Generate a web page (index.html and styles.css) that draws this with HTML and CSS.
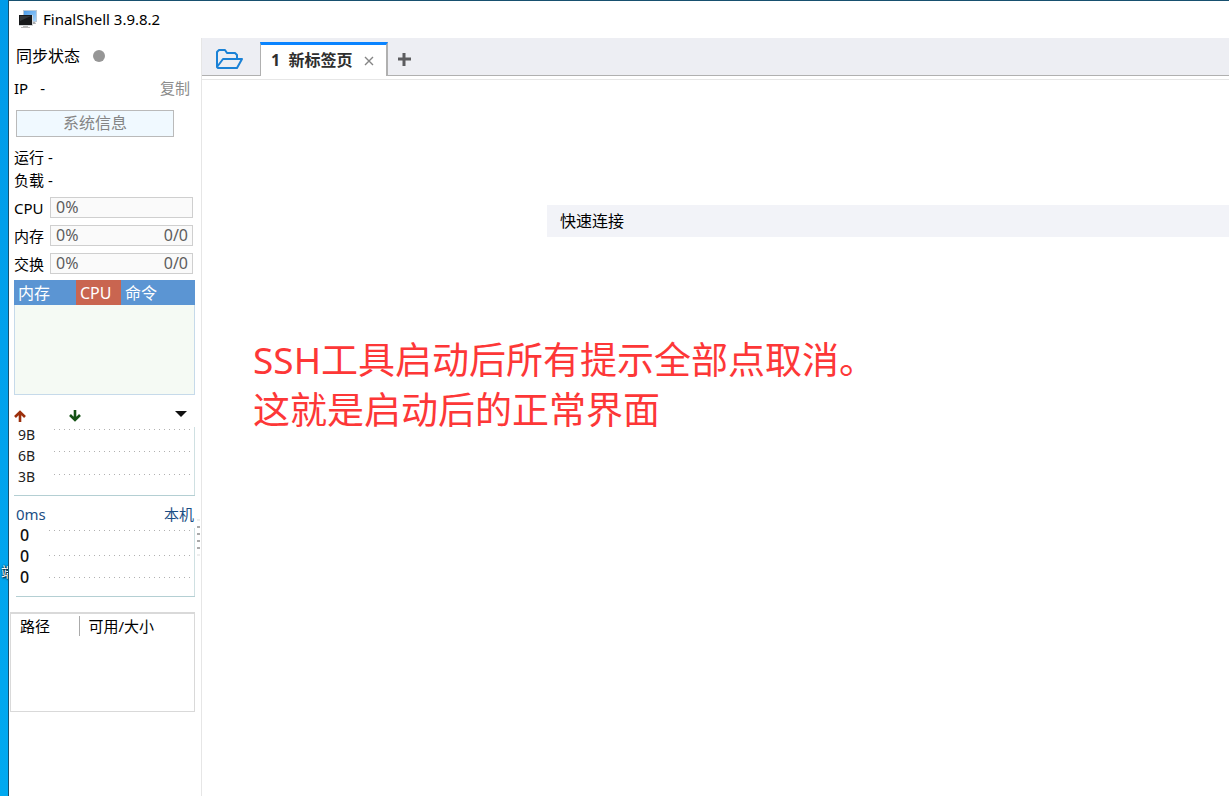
FILE: index.html
```html
<!DOCTYPE html>
<html lang="zh-CN">
<head>
    <meta charset="UTF-8">
    <meta name="viewport" content="width=device-width, initial-scale=1.0">
    <title>FinalShell 3.9.8.2</title>
    <link rel="stylesheet" href="styles.css">
</head>
<body>
    <div class="desktop"><span class="desktop-label">端</span></div>
    <div class="window">
        <header class="titlebar">
            <svg class="app-icon" width="20" height="20" viewBox="0 0 20 20">
                <defs>
                    <linearGradient id="screen" x1="0" y1="0" x2="1" y2="1">
                        <stop offset="0" stop-color="#4a9be8"/>
                        <stop offset="1" stop-color="#a5d3fa"/>
                    </linearGradient>
                </defs>
                <rect x="5" y="1" width="14" height="12" fill="#b9c9d8"/>
                <rect x="6" y="2" width="12" height="10" fill="url(#screen)"/>
                <path d="M13 13h4l1 2h-5z" fill="#a9abad"/>
                <rect x="1" y="6" width="14" height="11" fill="#d5d8da"/>
                <rect x="1" y="6" width="13" height="10" fill="#17191b"/>
                <path d="M2 7h11l-11 5z" fill="#34383b"/>
                <path d="M5 17h5v1h2v1H3v-1h2z" fill="#bcbcbc"/>
            </svg>
            <span>FinalShell 3.9.8.2</span>
        </header>

        <div class="content">
            <aside class="sidebar">
                <div class="sync">同步状态<span class="dot"></span></div>
                <div class="ip">
                    <span>IP</span><span>-</span>
                    <button class="copy" type="button">复制</button>
                </div>
                <button class="sysinfo" type="button">系统信息</button>
                <div class="stat">运行 -</div>
                <div class="stat">负载 -</div>

                <div class="meters">
                    <span>CPU</span>
                    <div class="meter"><span>0%</span></div>
                    <span>内存</span>
                    <div class="meter"><span>0%</span><span>0/0</span></div>
                    <span>交换</span>
                    <div class="meter"><span>0%</span><span>0/0</span></div>
                </div>

                <div class="processes">
                    <table>
                        <tr>
                            <th class="col-mem">内存</th>
                            <th class="col-cpu">CPU</th>
                            <th>命令</th>
                        </tr>
                    </table>
                </div>

                <div class="net-head">
                    <svg width="12" height="12" viewBox="0 0 12 12" fill="none" stroke="#9c2f0c" stroke-width="2.6">
                        <path d="M6 12V2M1 7l5-5 5 5"/>
                    </svg>
                    <svg class="down" width="12" height="12" viewBox="0 0 12 12" fill="none" stroke="#145214" stroke-width="2.6">
                        <path d="M6 0v10M1 5l5 5 5-5"/>
                    </svg>
                    <button class="net-menu" type="button" aria-label="网卡">
                        <svg width="12" height="6" viewBox="0 0 12 6"><path d="M0 0h12L6 6z" fill="#111"/></svg>
                    </button>
                </div>
                <div class="chart">
                    <div class="labels"><span>9B</span><span>6B</span><span>3B</span></div>
                    <svg class="plot" width="100%" height="68">
                        <line x1="0" y1="2.500" x2="100%" y2="2.500"/>
                        <line x1="0" y1="24.500" x2="100%" y2="24.500"/>
                        <line x1="0" y1="47.500" x2="100%" y2="47.500"/>
                    </svg>
                </div>

                <div class="ping-head"><span>0ms</span><span>本机</span></div>
                <div class="chart ping">
                    <div class="labels"><span>0</span><span>0</span><span>0</span></div>
                    <svg class="plot" width="100%" height="68">
                        <line x1="0" y1="2.500" x2="100%" y2="2.500"/>
                        <line x1="0" y1="27.500" x2="100%" y2="27.500"/>
                        <line x1="0" y1="49.500" x2="100%" y2="49.500"/>
                    </svg>
                </div>

                <div class="disks">
                    <table>
                        <tr>
                            <th class="col-path">路径</th>
                            <th class="col-size">可用/大小</th>
                        </tr>
                    </table>
                </div>

                <div class="grip"><i></i><i></i><i></i><i></i><i></i><i></i></div>
            </aside>

            <main class="main">
                <nav class="tabs">
                    <button class="open" type="button" aria-label="打开">
                        <svg width="28" height="22" viewBox="0 0 28 22" fill="none" stroke="#1b82d6" stroke-width="2" stroke-linejoin="round">
                            <path d="M2 19V4l2-2h6l2 3h8l2 2v4"/>
                            <path d="M2 19l6-8h19l-5 9H3z"/>
                        </svg>
                    </button>
                    <div class="tab">
                        <a href="#">1&nbsp; 新标签页</a>
                        <button class="close" type="button" aria-label="关闭">
                            <svg width="10" height="10" viewBox="0 0 10 10" stroke="#858585" stroke-width="1.4"><path d="M1 1l8 8M9 1L1 9"/></svg>
                        </button>
                    </div>
                    <button class="add" type="button" aria-label="新建">
                        <svg width="14" height="14" viewBox="0 0 14 14" fill="#5c5c5f"><path d="M5.500 1h3v4.500H14v3H8.500V14h-3V8.500H1v-3h4.500z"/></svg>
                    </button>
                </nav>
                <div class="page">
                    <div class="quick">快速连接</div>
                    <p class="note">SSH工具启动后所有提示全部点取消。<br>这就是启动后的正常界面</p>
                </div>
            </main>
        </div>
    </div>
</body>
</html>
```

FILE: styles.css
```css
* {
    box-sizing: border-box;
}
body {
    margin: 0;
    display: flex;
    min-height: 100vh;
    overflow: hidden;
    font-family: 'Noto Sans', 'Noto Sans CJK SC', sans-serif;
    font-size: 15px;
    line-height: 20px;
    color: #000;
}
button {
    padding: 0;
    border: none;
    background: none;
    font: inherit;
    cursor: pointer;
}
svg {
    display: block;
    flex-shrink: 0;
}
table {
    width: 100%;
    border-collapse: collapse;
}
th {
    font-weight: normal;
    text-align: left;
}

/* Desktop strip left of the window */
.desktop {
    width: 8px;
    flex-shrink: 0;
    display: flex;
    align-items: center;
    overflow: hidden;
    background: linear-gradient(#009be9, #00a9f0);
}
.desktop-label {
    margin: 348px 0 0 1px;
    font-size: 14px;
    color: #fff;
    text-shadow: 1px 1px 2px #000, 0 0 2px #000;
}

.window {
    flex: 1;
    min-width: 0;
    display: flex;
    flex-direction: column;
    border-top: 1px solid #17506f;
    border-left: 1px solid #17506f;
    background: #fff;
}
.titlebar {
    display: flex;
    align-items: center;
    gap: 5px;
    height: 37px;
    padding: 0 0 2px 9px;
}
.content {
    flex: 1;
    display: flex;
}

/* Sidebar */
.sidebar {
    position: relative;
    width: 192px;
    flex-shrink: 0;
    padding: 0 6px 0 5px;
}
.sync {
    display: flex;
    align-items: center;
    gap: 13px;
    height: 36px;
    padding-left: 2px;
    font-size: 16px;
}
.dot {
    width: 12px;
    height: 12px;
    border-radius: 50%;
    background: #969696;
}
.ip {
    display: flex;
    align-items: center;
    gap: 12px;
    height: 28px;
    padding-right: 5px;
}
.copy {
    margin-left: auto;
    color: #8c8c8c;
}
.sysinfo {
    display: block;
    width: 158px;
    height: 27px;
    margin: 8px 0 9px 2px;
    padding-bottom: 2px;
    border: 1px solid #bababa;
    background: #f0f9ff;
    font-size: 16px;
    color: #858585;
}
.stat {
    line-height: 23px;
}
.meters {
    display: grid;
    grid-template-columns: 36px 1fr;
    grid-auto-rows: 21px;
    gap: 7px 0;
    align-items: center;
    margin: 5px 2px 6px 0;
}
.meter {
    display: flex;
    justify-content: space-between;
    align-items: center;
    height: 21px;
    padding: 0 4px 1px 5px;
    border: 1px solid #cfcfcf;
    background: #fafafa;
    font-size: 16px;
    color: #5e5e5e;
}
.processes {
    height: 115px;
    border: 1px solid #c6daea;
    border-top: none;
    background: #f5faf4;
}
.processes table {
    margin: 0 -1px;
    width: calc(100% + 2px);
    table-layout: fixed;
}
.processes th {
    height: 25px;
    padding: 0 4px;
    background: #5b95d3;
    font-size: 16px;
    color: #fff;
}
.processes .col-mem {
    width: 62px;
}
.processes .col-cpu {
    width: 45px;
    background: #c96550;
}
.net-head {
    display: flex;
    align-items: center;
    height: 29px;
    padding: 13px 8px 0 0;
}
.net-head .down {
    margin-left: 43px;
}
.net-menu {
    margin: 0 0 4px auto;
}
.chart {
    display: flex;
    align-items: flex-end;
    height: 72px;
    border-bottom: 1px solid #b4cfd3;
}
.labels {
    width: 40px;
    flex-shrink: 0;
    align-self: flex-start;
    display: flex;
    flex-direction: column;
    padding-left: 4px;
    font-size: 14px;
    line-height: 21px;
    color: #222;
}
.plot {
    flex: 1 1 0;
    min-width: 0;
    border-right: 1px solid #cfe0e2;
}
.plot line {
    stroke: #b0b0b0;
    stroke-dasharray: 1 4;
}
.ping-head {
    display: flex;
    justify-content: space-between;
    height: 29px;
    padding: 8px 1px 0 2px;
    color: #1c4f85;
}
.ping {
    margin-left: 2px;
}
.ping .labels {
    width: 33px;
    font-size: 16px;
    font-weight: 500;
    color: #111;
}
.disks {
    height: 100px;
    margin: 15px 0 0 -4px;
    border: 1px solid #d9d9d9;
    border-top-width: 2px;
}
.disks table {
    margin-top: 2px;
}
.disks th {
    height: 20px;
    padding: 0 9px;
}
.disks .col-path {
    width: 68px;
    border-right: 1px solid #aaa;
}
/* Splitter handle over the sidebar edge */
.grip {
    position: absolute;
    top: 481px;
    right: 1px;
    display: grid;
    gap: 5px;
}
.grip i {
    width: 3px;
    height: 2px;
    background: #aaa;
}
.grip i:first-child,
.grip i:last-child {
    background: #eee;
}

/* Main area */
.main {
    flex: 1;
    min-width: 0;
    border-left: 1px solid #e6e6e6;
}
.tabs {
    display: flex;
    align-items: flex-end;
    height: 38px;
    background: linear-gradient(#b0b0b0, #b0b0b0) bottom / 100% 1px no-repeat #edeef3;
}
.open {
    width: 58px;
    height: 34px;
    padding-left: 13px;
}
.tab {
    display: flex;
    align-items: center;
    gap: 12px;
    height: 34px;
    padding: 0 12px 0 10px;
    border-top: 3px solid #0a84ff;
    border-right: 2px solid #b0b0b0;
    border-left: 1px solid #b0b0b0;
    background: #fff;
}
.tab a {
    padding-bottom: 2px;
    font-size: 16px;
    font-weight: bold;
    color: #2e2e2e;
    text-decoration: none;
}
.add {
    height: 34px;
    padding-left: 9px;
}
.page {
    margin-top: 3px;
    padding-top: 125px;
    border-top: 1px solid #e6e6e6;
}
.quick {
    margin-left: 345px;
    padding: 1px 13px 0;
    background: #f2f3f8;
    font-size: 16px;
    line-height: 31px;
}
.note {
    margin: 98px 0 0 51px;
    font-size: 37px;
    line-height: 50px;
    color: #fd3737;
}
```
